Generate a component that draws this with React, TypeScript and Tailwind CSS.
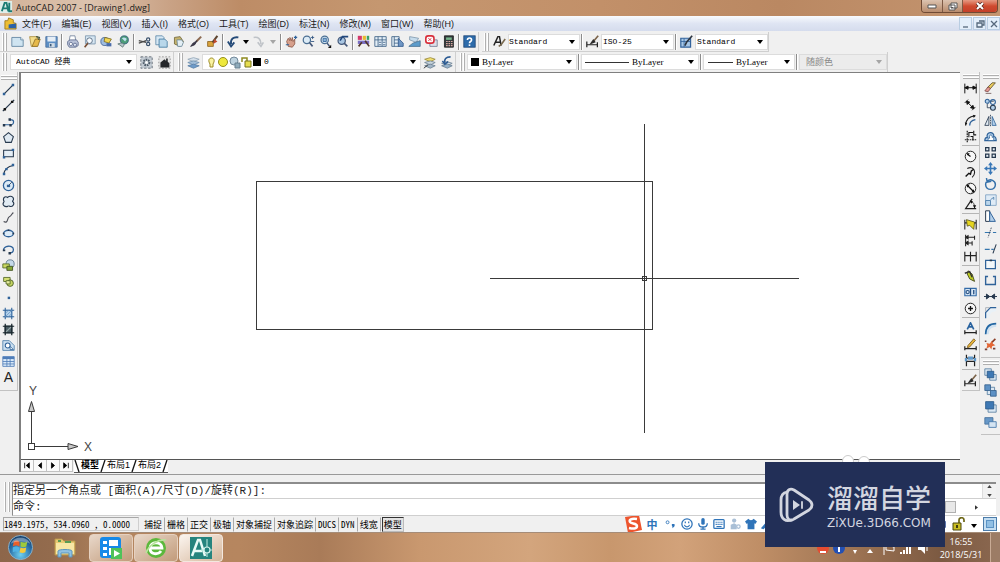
import React from "react";
import type { ReactNode } from "react";

type IconMap = Record<string, ReactNode>;

const D = "#26384d";
const B = "#2f6299";
const L = "#b4d0ea";

const icons: IconMap = {
  "New": <g><path d="M1 3h11l3 3v8H1z" fill="#cfe4f1" stroke="#5a7f9c" /><path d="M12 3v3h3" fill="#fff" stroke="#5a7f9c" /></g>,
  "Open": <g><path d="M2 2h10l-1 12H4z" fill="#f3dd8a" stroke="#a98a3c" /><path d="M5 14l4-9h6l-3 9z" fill="#e6b94a" stroke="#8c6d24" /><path d="M10 2l4 1-1 3" fill="none" stroke="#3c4d3a" strokeWidth="1.5" /></g>,
  "Save": <g><path d="M1 2h14v13H1z" fill="#5e8fc4" stroke="#4a6f9c" /><path d="M3 2h10v6H3z" fill="#e6eef6" /><path d="M5 10h7v5H5z" fill="#cfdbe6" /><path d="M6 11h2v3H6z" fill="#3b5a7a" /></g>,
  "Plot": <g><path d="M5 1h6l1 6H4z" fill="#fff" stroke="#6f7f9a" /><path d="M2 8l3-2h8l2 3v4l-3 2H4l-2-3z" fill="#b9c2d8" stroke="#5c6a8e" /><circle cx="6" cy="11" r="2" fill="#fff" stroke="#5c6a8e" /><circle cx="11" cy="12" r="2" fill="#dfe6f3" stroke="#5c6a8e" /></g>,
  "Plot Preview": <g><path d="M3 1h12v10H3z" fill="#d6e6f2" stroke="#7793ab" /><circle cx="8" cy="7" r="3.5" fill="#fff" fillOpacity=".8" stroke="#4b6079" /><path d="M6 10l-4 5" stroke="#7a4f35" strokeWidth="2" /></g>,
  "Publish": <g><circle cx="6" cy="8" r="5" fill="#9ebce0" stroke="#3c5e93" /><path d="M6 3l8 2-3 5-6-2z" fill="#f1d552" stroke="#7a6a20" /><path d="M8 10h6v4H8z" fill="#4a6cab" /></g>,
  "3D DWF": <g><circle cx="9" cy="6" r="5" fill="#4c9d78" stroke="#33597c" /><path d="M6 4c3-2 5 0 6 1l-2 3z" fill="#bfe0f0" /><path d="M1 11c4-1 6-2 8 1l-2 3-4-3z" fill="#b7c7c9" stroke="#5c7574" /></g>,
  "Cut": <g><path d="M1 7l9 2M1 10l9-3" stroke="#4b4b4b" strokeWidth="1.5" /><circle cx="12.5" cy="5.5" r="2" fill="none" stroke="#39506b" strokeWidth="1.5" /><circle cx="12.5" cy="11" r="2" fill="none" stroke="#39506b" strokeWidth="1.5" /></g>,
  "Copy": <g><path d="M1 1h8l2 2v9H1z" fill="#d7e8f4" stroke="#5a87a8" /><path d="M5 5h7l3 3v7H5z" fill="#b9d7ea" stroke="#40769e" /></g>,
  "Paste": <g><path d="M3 3l7-1 4 6-4 6-7-3z" fill="#c5b36d" stroke="#6e6335" /><path d="M6 6h6l2 3-2 5H7z" fill="#e4eff5" stroke="#6a8798" /></g>,
  "Match Properties": <g><path d="M15 2l-6 6" stroke="#8c6a52" strokeWidth="2.5" /><path d="M10 7l-3 5-5 2 3-4z" fill="#3d3a4c" stroke="#2a2736" /></g>,
  "Block Editor": <g><path d="M2 8h7v6H2z" fill="#dba43c" stroke="#8a611f" /><path d="M14 1l-6 8" stroke="#5d4630" strokeWidth="2.5" /><path d="M10 5l4 3-5 3z" fill="#c04a2d" /></g>,
  "Undo": <path d="M14 3C8 2 4 5 5 11M1 8l4 6 4-5" fill="none" stroke="#244a78" strokeWidth="2.3" />,
  "Redo": <path d="M2 3c6-1 9 2 9 8M7 9l4 5 3-5" fill="none" stroke="#bfc3c8" strokeWidth="2" />,
  "Pan": <g><path d="M4 14L2 8l2-4 2 3V3l2 4 1-4 1 5 2-3v6l-3 4z" fill="#d7a08c" stroke="#8a5646" /><path d="M11 3h4M13 1v4M1 12h4" stroke="#2f6299" strokeWidth="1.5" /></g>,
  "Zoom Realtime": <g><circle cx="6" cy="6" r="4.5" fill="#dcebf6" stroke="#4b6f93" strokeWidth="1.5" /><path d="M9 9l4 5" stroke="#45597a" strokeWidth="2" /><path d="M11 3h4M13 1v4M11 8h4" stroke="#2b4f7c" /></g>,
  "Zoom Window": <g><circle cx="7" cy="6" r="4.5" fill="#dcebf6" stroke="#4b6f93" strokeWidth="1.5" /><path d="M5 4h4v4H5z" fill="#8cb3d7" stroke="#2f6299" /><path d="M10 10l3 4" stroke="#45597a" strokeWidth="2" /><path d="M15 12v4h-4z" fill="#111" /></g>,
  "Zoom Previous": <g><circle cx="7" cy="7" r="4.5" fill="#a9c6e2" stroke="#45597a" strokeWidth="1.5" /><path d="M10 10l4 4" stroke="#45597a" strokeWidth="2" /><path d="M15 2H8L5 7" fill="none" stroke="#21477c" strokeWidth="2" /></g>,
  "Properties": <g><path d="M1 1h5v5H1z" fill="#d4386b" /><path d="M7 1h4v5H7z" fill="#e8b930" /><path d="M12 1h3v5h-3z" fill="#39a06a" /><path d="M1 7h14v4H1z" fill="#7a6ec4" /><path d="M10 7l5 7M6 9l-4 5" stroke="#513528" strokeWidth="2" fill="none" /></g>,
  "DesignCenter": <g><path d="M1 2h14v12H1z" fill="#e3eef6" stroke="#3b5f84" /><path d="M5 2v12M10 2v12M1 6h14M6 9h3M11 9h3M6 12h3M11 12h3" stroke="#3b5f84" /></g>,
  "Tool Palettes": <g><path d="M1 2h9v12H1z" fill="#e3eef6" stroke="#3b5f84" /><path d="M4 2v12M4 6h5M4 10h5" stroke="#3b5f84" /><path d="M9 4l6 6v4H9z" fill="#6f96c4" stroke="#31598c" /></g>,
  "Sheet Set Manager": <g><path d="M2 2l11 2-3 5-8-3z" fill="#c6dcec" stroke="#7f98ad" /><path d="M1 14l5-4 9-3v7z" fill="#5d9ccb" stroke="#4a708f" /></g>,
  "Markup Set Manager": <g><path d="M6 6h9v8H6z" fill="#dcdfe8" stroke="#6f7890" /><rect x="1" y="1" width="10" height="9" rx="3" fill="#fff" stroke="#d82f3b" strokeWidth="2" /><path d="M4 4l4 3M8 4L4 7" stroke="#d82f3b" /></g>,
  "QuickCalc": <g><path d="M3 1h11v14H3z" fill="#333a3d" stroke="#1e1e1e" /><path d="M5 3h7v3H5z" fill="#77b58b" /><path d="M5 8h2M8 8h2M11 8h2M5 10.500h2M8 10.500h2M11 10.500h2M5 13h2M8 13h2M11 13h2" stroke="#d8a7a0" strokeWidth="1.5" /></g>,
  "Help": <g><rect x="1" y="1" width="14" height="14" fill="#2e6cab" stroke="#1d4576" /><path d="M5.500 6c0-3 5-3 5 0 0 2-2.500 2-2.500 4" fill="none" stroke="#fff" strokeWidth="2" /><path d="M7 11.500h2v2H7z" fill="#fff" /></g>,
  "Text Style": <g><path d="M1 13L6 2h2l2 11M3 9h6" fill="none" stroke="#222" strokeWidth="1.800" /><path d="M15 5l-5 7-3 2" stroke="#7a6a50" strokeWidth="2" fill="none" /></g>,
  "Dimension Style": <g><path d="M1 8v7M14 9v6M1 12h13" stroke="#222" strokeWidth="1.500" /><path d="M15 1L9 8" stroke="#7a6248" strokeWidth="2" /><path d="M9 5l3 4-8 3z" fill="#2c2c2c" /></g>,
  "Table Style": <g><path d="M1 4h12v11H1z" fill="#a8c7e6" stroke="#33639c" strokeWidth="1.500" /><path d="M1 8h12M5 4v11" stroke="#33639c" /><path d="M15 1L8 9l-2 4" stroke="#2d3540" strokeWidth="2" fill="none" /></g>,
  "Workspace Settings": <g><rect x="1" y="1" width="14" height="14" fill="#c3cbd3" stroke="#56616b" strokeDasharray="3 2" /><circle cx="8" cy="8" r="3.500" fill="none" stroke="#4c5a67" strokeWidth="2.500" strokeDasharray="2 1" /><circle cx="8" cy="8" r="1.500" fill="#fff" /></g>,
  "My Workspace": <g><rect x="1" y="1" width="14" height="14" fill="#e4e4e4" stroke="#8b8b8b" strokeDasharray="2 2" /><path d="M3 8l5-4 2 2V3h2v4l2 2v5H3z" fill="#26282b" /></g>,
  "Layer Properties": <g><path d="M1 4l7-2 7 2-7 3z" fill="#d5e0ea" stroke="#93a6b8" /><path d="M1 8l7-2 7 2-7 3z" fill="#a3bfda" stroke="#6f8fae" /><path d="M1 12l7-2 7 2-7 3z" fill="#6e9bc9" stroke="#5a80a8" /></g>,
  "Make Layer Current": <g><path d="M2 4l7-2 6 2-6 3z" fill="#f0df70" stroke="#998635" /><path d="M2 8l7-2 6 2-6 3z" fill="#c9d6de" stroke="#6b8093" /><path d="M2 12l7-2 6 2-6 3z" fill="#a3b6c7" stroke="#6b8093" /><path d="M1 15l5-4" stroke="#222" /></g>,
  "Layer Previous": <g><path d="M2 9l7-2 6 2-6 3z" fill="#cbdbe8" stroke="#6b8093" /><path d="M2 12l7-2 6 2-6 3z" fill="#94b1cb" stroke="#6b8093" /><path d="M13 1C7 1 5 4 6 8M3 6l3 4 4-3" fill="none" stroke="#2b5a93" strokeWidth="2" /></g>,

  "Line": <g><path d="M3 13L13 3" stroke={D} strokeWidth="1.500" /><path d="M1 12h3v3H1zM12 1h3v3h-3z" fill={B} /></g>,
  "Construction Line": <g><path d="M1 15L15 1" stroke={D} strokeWidth="1.500" /><path d="M2 11h3v3H2zM11 2h3v3h-3z" fill="#111" /></g>,
  "Polyline": <g><path d="M2 12h10c3-1 3-6 0-6H9" fill="none" stroke={B} strokeWidth="1.500" /><path d="M1 11h3v3H1zM9 11h3v3H9zM8 4h3v3H8z" fill={D} /></g>,
  "Polygon": <path d="M8 2l6 5-2.500 7h-7L2 7z" fill="#dfe9f2" stroke={D} strokeWidth="1.300" />,
  "Rectangle": <g><path d="M2 4h12v8H2z" fill="#e5eef6" stroke={D} strokeWidth="1.300" /><path d="M1 11h3v3H1zM12 2h3v3h-3z" fill={B} /></g>,
  "Arc": <g><path d="M2 14C3 8 7 4 14 3" fill="none" stroke={D} strokeWidth="1.300" /><path d="M1 12h3v3H1zM4 6h3v3H4zM12 1h3v3h-3z" fill={B} /></g>,
  "Circle": <g><circle cx="8" cy="8" r="6.300" fill="#dcebf7" stroke={B} strokeWidth="1.600" /><path d="M8 8l4-4" stroke={D} /><path d="M6 7h4v3H6z" fill={B} /></g>,
  "Revision Cloud": <path d="M7 3c3-3 8-1 7 3-1 1-1 1-1 2 3 2 1 7-3 6-2-1-2-1-3 0-4 1-7-2-5-5 1-1 1-1 0-2C1 3 4 1 7 3z" fill="#e1ebf3" stroke={D} strokeWidth="1.400" />,
  "Spline": <path d="M2 13c6 3 4-5 7-6s3-4 5-5" fill="none" stroke="#4d4f58" strokeWidth="1.400" />,
  "Ellipse": <g><ellipse cx="8" cy="8" rx="6" ry="4" fill="#dcebf7" stroke={B} strokeWidth="1.700" /><path d="M1 7h2v2H1zM13 7h2v2h-2zM7 3h2v2H7z" fill={D} /></g>,
  "Ellipse Arc": <g><path d="M2 9C1 3 14 2 14 8c0 3-2 4-4 4" fill="none" stroke={B} strokeWidth="1.600" /><path d="M1 8h3v2H1zM8 11h3v3H8z" fill={D} /></g>,
  "Insert Block": <g><circle cx="10" cy="6" r="5" fill="#c5d9e9" stroke="#5b7488" /><path d="M1 6h8v5H1z" fill="#c9d860" stroke="#4d6222" /><path d="M6 9h7v5H6z" fill="#87a834" stroke="#3a4c1d" /></g>,
  "Make Block": <g><path d="M2 3h8v5H2z" fill="#d4df73" stroke="#4d6222" /><circle cx="10" cy="10" r="4" fill="#c3d361" stroke="#3f5220" /><path d="M5 7h5v4H5z" fill="#e6ec9f" stroke="#4d6222" /></g>,
  "Point": <path d="M7 7h3v3H7z" fill={B} />,
  "Hatch": <g><path d="M3 3h10v10H3z" fill={L} /><path d="M1 4h14M1 12h14M4 1v14M12 1v14" stroke={B} strokeWidth="1.300" /><path d="M4 12l8-8M4 8l4-4M8 12l4-4" stroke="#6d9cc8" /></g>,
  "Gradient": <g><path d="M3 3h10v10H3z" fill="#4a5c63" /><path d="M1 4h14M1 12h14M4 1v14M12 1v14" stroke="#18252b" strokeWidth="1.500" /><path d="M5 11l6-6" stroke="#96a9a9" strokeWidth="1.500" /></g>,
  "Region": <g><path d="M1 2h8l6 6v6H1z" fill="#cbdff0" stroke="#4a7ba8" /><circle cx="7" cy="8" r="3" fill="#fff" stroke={B} strokeWidth="1.300" /><path d="M10 9l4 4h-4z" fill="#fff" stroke={B} /></g>,
  "Table": <g><path d="M1 2h14v12H1z" fill="#d9e9f8" stroke="#4f7db8" /><path d="M1 2h14v3H1z" fill="#4f7db8" /><path d="M1 8h14M1 11h14M6 4v10M10 4v10" stroke="#4f7db8" /></g>,

  "Linear Dimension": <path d="M1 2v12M15 2v12M1 7h14M1 7l4-2v4zM15 7l-4-2v4z" fill="#111" stroke="#111" strokeWidth="1.200" />,
  "Aligned Dimension": <path d="M1 6l4-4M10 15l4-4M3 4l9 9M3 4l4 1-3 3zM12 13l-4-1 3-3z" fill="#111" stroke="#111" strokeWidth="1.200" />,
  "Arc Length": <g><path d="M2 14C2 7 6 3 14 2" fill="none" stroke="#222" strokeWidth="1.500" /><path d="M7 14c0-4 2-6 7-7" fill="none" stroke={B} strokeWidth="1.600" /><path d="M1 10l3 1-2 3zM11 1l3 1-2 3z" fill="#111" /></g>,
  "Ordinate Dimension": <g><path d="M4 1v14M1 12h14" stroke="#222" strokeWidth="1.500" strokeDasharray="2 1" /><path d="M6 9V3h5M8 8h3v5M12 1v5h3" fill="none" stroke="#111" strokeWidth="1.300" /></g>,
  "Radius Dimension": <g><circle cx="8" cy="8" r="6.500" fill="#f7f7f7" stroke="#222" strokeWidth="1.200" /><path d="M8 8L4 5" stroke="#111" strokeWidth="1.500" /><path d="M3 4h4L5 7z" fill="#111" /></g>,
  "Jogged Dimension": <g><path d="M4 3c8-4 12 5 6 11" fill="none" stroke="#222" strokeWidth="1.300" /><path d="M2 13l4-4 2 1 1-4 3-2" fill="none" stroke="#111" strokeWidth="1.700" /></g>,
  "Diameter Dimension": <g><circle cx="8" cy="8" r="6.500" fill="#f7f7f7" stroke="#222" strokeWidth="1.200" /><path d="M4 4l8 8" stroke="#111" strokeWidth="1.500" /><path d="M3 3h4L4 7zM13 13H9l3-4z" fill="#111" /></g>,
  "Angular Dimension": <g><path d="M10 1L2 13h13" fill="none" stroke="#222" strokeWidth="1.500" /><path d="M8 4c4 1 5 4 5 8" fill="none" stroke="#222" /><path d="M7 3l4 1-2 3zM11 9h4l-2 4z" fill="#111" /></g>,
  "Quick Dimension": <g><path d="M1 2v12M15 2v12M1 6h14" stroke="#222" strokeWidth="1.300" /><path d="M3 2l10 3-1 9-5-5-3 1z" fill="#e6d51e" stroke="#55511b" /></g>,
  "Baseline Dimension": <path d="M2 1v14M2 4h11M2 11h8M13 2v5M10 9v5M2 4l3-2v4zM2 11l3-2v4z" fill="#111" stroke="#222" strokeWidth="1.300" />,
  "Continue Dimension": <path d="M1 2v12M8 2v12M15 2v12M1 7h14" stroke="#222" strokeWidth="1.400" />,
  "Quick Leader": <g><path d="M5 1l5 4 3 9-6-3-3-6z" fill="#bccb22" stroke="#353a12" /><path d="M1 4l6-2 3 7" fill="none" stroke="#333" strokeWidth="1.700" /></g>,
  "Tolerance": <g><path d="M1 3h14v9H1z" fill="#d7e7f5" stroke="#336ba8" strokeWidth="1.400" /><path d="M8 3v9M12 5v5" stroke="#234d80" strokeWidth="1.600" /><circle cx="4.500" cy="7.500" r="2" fill="none" stroke="#234d80" strokeWidth="1.300" /></g>,
  "Center Mark": <g><circle cx="8" cy="8" r="6.500" fill="#f7f7f7" stroke="#222" strokeWidth="1.200" /><path d="M8 5v6M5 8h6" stroke="#111" strokeWidth="1.600" /></g>,
  "Dimension Edit": <g><path d="M4 9L8 1l4 8M6 6h4" fill="none" stroke="#28629e" strokeWidth="2" /><path d="M1 10v5M15 10v5M1 13h14" stroke="#222" strokeWidth="1.500" /></g>,
  "Dimension Text Edit": <g><path d="M1 10v5M15 10v5M1 13h14" stroke="#222" strokeWidth="1.500" /><path d="M12 1L5 9l-1 3 3-1 7-8z" fill="#e7b53b" stroke="#78581d" /></g>,
  "Dimension Update": <g><path d="M3 1v14M13 1v14M3 5h10M3 9h10" stroke="#222" strokeWidth="1.500" /><path d="M1 5h3v4H1zM12 5h3v4h-3zM5 3h6v4H5z" fill="#629aca" /></g>,

  "Erase": <g><path d="M14 1l-6 7-4-1 6-6z" fill="#eacb5b" stroke="#594b2e" /><path d="M8 8l-3 4-4-1 4-5z" fill="#e69992" stroke="#774848" /><path d="M2 14h7" stroke="#6d5555" /></g>,
  "Copy Object": <g><circle cx="4" cy="4" r="2.500" fill={L} stroke={B} strokeWidth="1.300" /><path d="M4 7v5h4M7 4h5" fill="none" stroke={D} /><circle cx="11" cy="5" r="3" fill="none" stroke={B} strokeWidth="1.400" /><circle cx="11" cy="12" r="3" fill={L} stroke={D} strokeWidth="1.300" /></g>,
  "Mirror": <g><path d="M6 3v11H1z" fill="#e2ebf4" stroke={D} /><path d="M10 3v11h5z" fill={L} stroke={B} /><path d="M8 1v14" stroke={D} strokeDasharray="2 1" /></g>,
  "Offset": <g><path d="M1 13c0-3 1-4 3-4C2 2 13 1 12 8c3 0 3 3 3 5z" fill={L} stroke={B} strokeWidth="1.500" /><path d="M5 13V10h2c-2-5 4-5 3-1h2v4z" fill="#fff" stroke={B} /></g>,
  "Array": <path d="M2 2h4v4H2zM10 2h4v4h-4zM2 10h4v4H2zM10 10h4v4h-4z" fill="#e6edf4" stroke={D} strokeWidth="1.500" />,
  "Move": <path d="M8 0l3 4H9v3h3V5l4 3-4 3V9H9v3h2l-3 4-3-4h2V9H4v2L0 8l4-3v2h3V4H5z" fill="#3977b7" />,
  "Rotate": <path d="M4 4c4-4 10 0 10 4 0 8-12 8-12 0 0-1 0-2 1-3M3 0l1 5 5-1" fill="none" stroke="#336fa9" strokeWidth="1.800" />,
  "Scale": <g><path d="M2 1h13v13H2z" fill="#dfebf6" stroke="#7b9fc1" /><path d="M2 8h6v6H2z" fill="#bcd6ec" stroke="#4276a6" /><path d="M8 7l4-3v3" fill="none" stroke="#4276a6" /></g>,
  "Stretch": <g><path d="M2 1h5v13H2z" fill="#fff" stroke={D} strokeWidth="1.200" /><path d="M7 2l7 12H7z" fill={L} stroke={B} strokeWidth="1.200" /></g>,
  "Trim": <g><path d="M1 8h7M11 8h4" stroke="#3475ad" strokeWidth="1.500" /><path d="M9 2L5 14" stroke={D} strokeDasharray="2 1" /></g>,
  "Extend": <g><path d="M1 9h6M9 9h3" stroke="#3475ad" strokeWidth="1.500" /><path d="M15 3l-4 11" stroke={D} strokeWidth="1.300" /></g>,
  "Break at Point": <g><path d="M2 3h12v10H2z" fill="#f3f7fa" stroke={B} strokeWidth="1.500" /><path d="M7 2h3v2H7z" fill={D} /></g>,
  "Break": <path d="M5 3H2v10h12V3h-3" fill="none" stroke={B} strokeWidth="1.700" />,
  "Join": <path d="M0 8h16M3 5l4 3-4 3zM13 5L9 8l4 3z" fill={D} stroke={D} strokeWidth="1.200" />,
  "Chamfer": <g><path d="M2 15V8l6-6h7v4L9 8l-4 7z" fill="#e9f1f7" /><path d="M2 15V8l6-6h7" fill="none" stroke={B} strokeWidth="1.500" /><path d="M2 7V2h5" fill="none" stroke="#a1a9b0" /></g>,
  "Fillet": <g><path d="M2 15C2 6 6 2 15 2v4C9 6 6 9 6 15z" fill="#cfe1f0" /><path d="M2 15C2 6 6 2 15 2" fill="none" stroke="#2467a3" strokeWidth="2" /></g>,
  "Explode": <g><path d="M3 6l4 1 3-4 1 4 3 2-4 1-1 4-2-3-4 2 1-4z" fill="#e46735" /><path d="M10 5l4-4" stroke="#8b3d25" strokeWidth="2" /><path d="M1 13h3v2H1zM11 12h3v2h-3zM1 3h2v2H1z" fill="#754238" /></g>,
  "Bring to Front": <g><path d="M1 1h8v8H1zM7 8h8v7H7z" fill="#dbe8f3" stroke="#557c9f" /><path d="M4 4h8v8H4z" fill="#3e78b4" stroke="#275788" /></g>,
  "Send to Back": <g><path d="M4 4h9v9H4z" fill="#dbe8f3" stroke="#557c9f" /><path d="M1 1h7v7H1zM8 8h7v7H8z" fill="#5d91c5" stroke="#345f8b" /></g>,
  "Bring Above Objects": <g><path d="M5 6h10v9H5z" fill="#dbe8f3" stroke="#557c9f" /><path d="M2 2h10v9H2z" fill="#3e78b4" stroke="#275788" /></g>,
  "Send Under Objects": <g><path d="M1 2h10v8H1z" fill="#6798c8" stroke="#426f9a" /><path d="M6 7h9v7H6z" fill="#d4e4f2" stroke="#3f74a8" /></g>,
};

function Tool({ name }: { name: string }) {
  return (
    <button type="button" aria-label={name} className="flex h-4 w-[17px] shrink-0 items-center justify-center">
      {name === "Multiline Text" ? (
        <span className="font-['Liberation_Sans'] text-sm leading-4 text-[#222]">A</span>
      ) : (
        <svg viewBox="0 0 16 16" className="size-[13px]" fill="none">{icons[name]}</svg>
      )}
    </button>
  );
}

const Tools = ({ names }: { names: string[] }) => <>{names.map((n) => <Tool key={n} name={n} />)}</>;

const Sep = () => <span className="mx-px h-4 w-[2px] shrink-0 border-l border-[#8c8c8c] bg-white" />;

const Grip = () => (
  <span className="mx-[2px] flex h-[18px] shrink-0 gap-px">
    <span className="w-[2px] border-r border-[#b0b0b0] bg-white" />
    <span className="w-[2px] border-r border-[#b0b0b0] bg-white" />
  </span>
);

const HGrip = () => (
  <span className="flex h-[6px] w-4 shrink-0 flex-col gap-px">
    <span className="h-[2px] border-b border-[#b0b0b0] bg-white" />
    <span className="h-[2px] border-b border-[#b0b0b0] bg-white" />
  </span>
);

function Caret({ muted = false }: { muted?: boolean }) {
  return (
    <svg viewBox="0 0 6 4" className={muted ? "h-1 w-1.5 shrink-0 fill-[#a5a5a5]" : "h-1 w-1.5 shrink-0 fill-black"}>
      <path d="M0 0h6L3 4z" />
    </svg>
  );
}

type DropProps = { label: string; value: string; box: string; serif?: boolean; disabled?: boolean; children?: ReactNode };

function Drop({ label, value, box, serif = false, disabled = false, children }: DropProps) {
  const face = serif ? "font-['Liberation_Serif','Noto_Sans_CJK_SC',serif] text-[9px]" : "font-['Liberation_Mono','Noto_Sans_CJK_SC',monospace] text-[8px]";
  const tone = disabled ? "bg-[#ececec] text-[#888]" : "bg-white text-black";
  return (
    <span className={`flex h-4 shrink-0 items-center gap-[3px] border border-[#dcdcdc] pr-1 ${tone} ${box}`}>
      {children}
      <select aria-label={label} disabled={disabled} defaultValue={value} className={`min-w-0 flex-1 appearance-none bg-transparent p-0 leading-3 opacity-100 outline-none ${face}`}>
        <option>{value}</option>
      </select>
      <Caret muted={disabled} />
    </span>
  );
}

const Swatch = () => <span className="size-2 shrink-0 bg-black" />;

const menus = ["文件(F)", "编辑(E)", "视图(V)", "插入(I)", "格式(O)", "工具(T)", "绘图(D)", "标注(N)", "修改(M)", "窗口(W)", "帮助(H)"];

const drawTools = ["Line", "Construction Line", "Polyline", "Polygon", "Rectangle", "Arc", "Circle", "Revision Cloud", "Spline", "Ellipse", "Ellipse Arc", "Insert Block", "Make Block", "Point", "Hatch", "Gradient", "Region", "Table", "Multiline Text"];

const dimensionGroups = [
  ["Linear Dimension", "Aligned Dimension", "Arc Length", "Ordinate Dimension"],
  ["Radius Dimension", "Jogged Dimension", "Diameter Dimension", "Angular Dimension"],
  ["Quick Dimension", "Baseline Dimension", "Continue Dimension"],
  ["Quick Leader", "Tolerance", "Center Mark"],
  ["Dimension Edit", "Dimension Text Edit", "Dimension Update"],
  ["Dimension Style"],
];

const modifyTools = ["Erase", "Copy Object", "Mirror", "Offset", "Array", "Move", "Rotate", "Scale", "Stretch", "Trim", "Extend", "Break at Point", "Break", "Join", "Chamfer", "Fillet", "Explode"];
const orderTools = ["Bring to Front", "Send to Back", "Bring Above Objects", "Send Under Objects"];

const statusModes = ["捕捉", "栅格", "正交", "极轴", "对象捕捉", "对象追踪", "DUCS", "DYN", "线宽", "模型"];

function TitleBar() {
  return (
    <header className="flex h-4 items-start bg-[linear-gradient(90deg,#d3b298_0%,#dcc3ae_9%,#c9a285_17%,#bd8c66_24%,#c59770_38%,#c29069_60%,#ba8862_78%,#c49570_100%)]">
      <svg viewBox="0 0 14 14" className="mt-px size-[13px]">
        <path d="M0 0h13v13H0z" fill="#dfeeea" />
        <path d="M2 11L5 2h2l2 9M3 8h5M10 2v9h3" fill="none" stroke="#1b7c74" strokeWidth="2" />
      </svg>
      <h1 className="ml-[3px] flex-1 font-['Open_Sans',sans-serif] text-[9px] leading-[15px] text-[#1c1c1c]">AutoCAD 2007 - [Drawing1.dwg]</h1>
      <div className="mr-[2px] flex h-[13px] overflow-hidden rounded-b border border-t-0 border-[#6f4a35]">
        <button type="button" aria-label="Minimize" className="flex w-[21px] items-center justify-center border-r border-[#7d5a45] bg-linear-to-b from-[#dcc3b0] to-[#b88c6d]">
          <svg viewBox="0 0 10 8" className="h-2 w-2.5"><path d="M1 3h8v3H1z" fill="#fff" stroke="#555" /></svg>
        </button>
        <button type="button" aria-label="Restore" className="flex w-5 items-center justify-center border-r border-[#7d5a45] bg-linear-to-b from-[#dcc3b0] to-[#b88c6d]">
          <svg viewBox="0 0 10 9" className="h-[9px] w-2.5"><path d="M3 1h6v5H3zM1 3h6v5H1z" fill="#fff" stroke="#555" /><path d="M3 5h2v1H3z" fill="#555" /></svg>
        </button>
        <button type="button" aria-label="Close" className="flex w-[34px] items-center justify-center bg-linear-to-b from-[#e49a83] via-[#cf4a2f] to-[#c4402a]">
          <svg viewBox="0 0 10 8" className="h-2 w-2.5"><path d="M2 1l6 6M8 1L2 7" stroke="#5b2a22" strokeWidth="3.500" /><path d="M2 1l6 6M8 1L2 7" stroke="#fff" strokeWidth="2" /></svg>
        </button>
      </div>
    </header>
  );
}

function MenuBar() {
  return (
    <nav className="flex h-[15px] items-center bg-linear-to-b from-[#f8fafd] via-[#dfe5f3] to-[#d5dced]">
      <svg viewBox="0 0 14 14" className="ml-1 size-[13px]">
        <path d="M1 4h3l1-3 5 2v3l3 1v6H1z" fill="#edbe33" stroke="#a17c1f" />
        <path d="M5 8l8-1v5H5z" fill="#2b62a8" />
      </svg>
      <ul className="ml-[5px] flex flex-1 gap-[10px] font-['Liberation_Sans','Noto_Sans_CJK_SC',sans-serif] text-[9px] leading-[14px] text-[#1b1b1b]">
        {menus.map((m) => <li key={m}><button type="button" className="whitespace-nowrap">{m}</button></li>)}
      </ul>
      <div className="flex gap-px">
        {["M2 8h5", "M4 2h5v4H7M2 4h5v4H2z", "M2 2l6 6M8 2L2 8"].map((d, i) => (
          <button key={d} type="button" aria-label={["Minimize drawing", "Restore drawing", "Close drawing"][i]} className="flex h-[13px] w-[13px] items-center justify-center border border-[#b9cde2] bg-[#e3eefa]">
            <svg viewBox="0 0 10 10" className="size-2.5"><path d={d} fill="none" stroke="#56687c" strokeWidth="1.300" /></svg>
          </button>
        ))}
      </div>
    </nav>
  );
}

function Toolbars() {
  return (
    <div className="overflow-hidden pt-px">
      <div className="flex">
        <div role="toolbar" aria-label="Standard" className="flex h-5 items-center border-r border-b border-[#cfcfcf]">
          <Grip />
          <Tools names={["New", "Open", "Save"]} />
          <Sep />
          <Tools names={["Plot", "Plot Preview", "Publish", "3D DWF"]} />
          <Sep />
          <Tools names={["Cut", "Copy", "Paste", "Match Properties", "Block Editor"]} />
          <Sep />
          <Tool name="Undo" />
          <button type="button" aria-label="Undo list" className="flex w-2 justify-center"><Caret /></button>
          <Tool name="Redo" />
          <button type="button" aria-label="Redo list" className="flex w-3 justify-center"><Caret muted /></button>
          <Sep />
          <Tools names={["Pan", "Zoom Realtime", "Zoom Window", "Zoom Previous"]} />
          <Sep />
          <Tools names={["Properties", "DesignCenter", "Tool Palettes", "Sheet Set Manager", "Markup Set Manager", "QuickCalc"]} />
          <Sep />
          <Tool name="Help" />
        </div>
        <div role="toolbar" aria-label="Styles" className="ml-[3px] flex h-5 items-center border-r border-b border-[#cfcfcf]">
          <Grip />
          <Tool name="Text Style" />
          <Drop label="Text style" value="Standard" box="w-[72px]" />
          <Sep />
          <Tool name="Dimension Style" />
          <Drop label="Dimension style" value="ISO-25" box="w-[73px] pl-px" />
          <Sep />
          <Tool name="Table Style" />
          <Drop label="Table style" value="Standard" box="w-[73px] pl-px" />
        </div>
      </div>
      <div className="flex">
        <div role="toolbar" aria-label="Workspaces" className="flex h-5 items-center gap-px border-r border-[#cfcfcf]">
          <Grip />
          <Drop label="Workspace" value="AutoCAD 经典" box="w-[127px] pl-[5px]" />
          <Tool name="Workspace Settings" />
          <Tool name="My Workspace" />
        </div>
        <div role="toolbar" aria-label="Layers" className="ml-[2px] flex h-5 items-center border-r border-[#cfcfcf]">
          <Grip />
          <Tool name="Layer Properties" />
          <Drop label="Layer" value="0" box="w-[219px] pl-1">
            <svg viewBox="0 0 54 14" className="h-3.5 w-[54px]">
              <path d="M3 9C-2 1 11 1 6 9v3H3z" fill="#faf3a0" stroke="#9b8b28" />
              <circle cx="16" cy="7" r="4.500" fill="#eee83c" stroke="#958f1c" />
              <circle cx="27" cy="6" r="4" fill="#bdd2df" stroke="#72899a" /><path d="M28 8h5v5h-5z" fill="#8eaabb" stroke="#667f8e" />
              <path d="M35 7V3h5v4" fill="none" stroke="#8f8b20" strokeWidth="1.500" /><path d="M38 6h6v6h-6z" fill="#e6dd51" stroke="#79751d" />
              <path d="M46 3h8v8h-8z" fill="#000" />
            </svg>
          </Drop>
          <Tool name="Make Layer Current" />
          <Tool name="Layer Previous" />
        </div>
        <div role="toolbar" aria-label="Properties" className="ml-[2px] flex h-5 items-center border-r border-[#cfcfcf]">
          <Grip />
          <Drop label="Color" value="ByLayer" box="w-[110px] pl-[3px]" serif><Swatch /></Drop>
          <Sep />
          <Drop label="Linetype" value="ByLayer" box="w-[118px] pl-[3px]" serif><span className="h-px w-11 shrink-0 bg-[#333]" /></Drop>
          <Sep />
          <Drop label="Lineweight" value="ByLayer" box="w-[92px] pl-1" serif><span className="h-px w-[25px] shrink-0 bg-[#333]" /></Drop>
          <Sep />
          <Drop label="Plot style" value="随颜色" box="w-[88px] pl-1.5" serif disabled />
        </div>
      </div>
    </div>
  );
}

function Drawing() {
  return (
    <div className="relative flex-1 overflow-hidden bg-white">
      <svg className="absolute inset-0 h-full w-full" role="img" aria-label="Model space" shapeRendering="crispEdges">
        <g fill="none" stroke="#3a3a3a" strokeWidth="1">
          <path d="M235.500 108.500h396v148h-396z" />
          <path d="M623.500 51v309M469 205.500h309M621.500 203.500h4v4h-4z" />
          <path d="M7.500 370.500h6v6h-6zM10.500 370V339M14 373.500h33" />
        </g>
        <g fill="#c8c8c8" stroke="#3a3a3a" shapeRendering="auto">
          <path d="M10.500 328.500l3 10h-6z" />
          <path d="M57 373.500l-10-3v6z" />
        </g>
        <g className="font-['Liberation_Sans'] text-xs" fill="#444">
          <text x="8" y="322">Y</text>
          <text x="63" y="378">X</text>
        </g>
      </svg>
    </div>
  );
}

function LayoutTabs() {
  const arrows = [
    ["First tab", "M2 1v7M8 1L4 4.500 8 8z"],
    ["Previous tab", "M7 1L3 4.500 7 8z"],
    ["Next tab", "M3 1l4 3.500L3 8z"],
    ["Last tab", "M8 1v7M2 1l4 3.500L2 8z"],
  ];
  const slash = <svg viewBox="0 0 6 12" className="h-3 w-1.5 shrink-0"><path d="M5 0L1 12" stroke="#111" strokeWidth="1.300" /></svg>;
  return (
    <div className="flex h-[13px] items-center border-t border-[#555] bg-[#f0f0f0]">
      {arrows.map(([label, d]) => (
        <button key={label} type="button" aria-label={label} className="flex h-3 w-[13px] items-center justify-center border-r border-b border-[#c2c2c2] bg-[#fafafa]">
          <svg viewBox="0 0 10 9" className="h-[7px] w-2"><path d={d} fill="#000" stroke="#000" /></svg>
        </button>
      ))}
      <div role="tablist" className="ml-px flex items-center gap-px border-b border-[#555] bg-white font-['Liberation_Sans','Noto_Sans_CJK_SC',sans-serif] text-[9px] leading-[11px] text-black">
        <svg viewBox="0 0 6 12" className="h-3 w-1.5 shrink-0"><path d="M1 0l4 12" stroke="#111" strokeWidth="1.300" /></svg>
        <button type="button" role="tab" aria-selected="true" className="font-bold">模型</button>
        {slash}
        <button type="button" role="tab" aria-selected="false">布局1</button>
        {slash}
        <button type="button" role="tab" aria-selected="false">布局2</button>
        {slash}
      </div>
    </div>
  );
}

function CommandWindow() {
  return (
    <section aria-label="Command line" className="flex h-11 flex-col">
      <div className="mt-[2px] h-[8px] border-t border-[#999]" />
      <div className="flex flex-1">
        <div className="ml-1 flex w-2 gap-[2px] pb-1">
          <span className="w-[2px] border-r border-[#b0b0b0] bg-white" />
          <span className="w-[2px] border-r border-[#b0b0b0] bg-white" />
        </div>
        <div className="mr-1 flex flex-1 flex-col border-t-2 border-b border-l border-[#8c8c8c] border-b-[#cfcfcf] bg-white font-['Liberation_Mono','Noto_Sans_CJK_SC',monospace] text-[11px] leading-[14px] text-[#222]">
          <div className="flex h-[15px] items-center border-b border-[#cfcfcf]">
            <p className="flex-1 whitespace-pre">指定另一个角点或 [面积(A)/尺寸(D)/旋转(R)]:</p>
            <button type="button" aria-label="Scroll history" className="flex h-[14px] w-[14px] flex-col items-center justify-between border-l border-[#ddd] bg-[#f2f2f2] py-px">
              <svg viewBox="0 0 6 4" className="h-[3px] w-[5px] fill-[#444]"><path d="M0 4h6L3 0z" /></svg>
              <svg viewBox="0 0 6 4" className="h-[3px] w-[5px] fill-[#444]"><path d="M0 0h6L3 4z" /></svg>
            </button>
          </div>
          <div className="flex flex-1 items-center">
            <label htmlFor="command">命令:</label>
            <input id="command" className="h-3 min-w-0 flex-1 bg-transparent outline-none" />
            <span className="h-3 w-[11px] border border-[#b0b0b0] bg-[#e8e8e8]" />
            <button type="button" aria-label="Scroll right" className="mr-4 ml-4 flex w-2 justify-center">
              <svg viewBox="0 0 4 6" className="h-[5px] w-[3px] fill-[#333]"><path d="M0 0v6l4-3z" /></svg>
            </button>
          </div>
        </div>
      </div>
    </section>
  );
}

function ImeBar() {
  return (
    <div className="flex h-[17px] items-center bg-white pr-2 text-[#2f74b9]">
      <svg viewBox="0 0 20 20" className="-ml-[10px] size-5">
        <path d="M2 3l14-2 3 15-14 3z" fill="#ed552e" />
        <path d="M14 5C8 4 6 6 7 8s7 1 7 4-4 3-8 2" fill="none" stroke="#fff" strokeWidth="2.500" />
      </svg>
      <span className="w-[18px] text-center font-['Noto_Sans_CJK_SC',sans-serif] text-[11px] leading-4 font-bold">中</span>
      <svg viewBox="0 0 14 14" className="ml-1 size-3"><circle cx="3" cy="5" r="1.700" fill="none" stroke="currentColor" /><path d="M8 7h3c1 3-1 4-3 5 1-1 1-2 0-3z" fill="currentColor" /></svg>
      <svg viewBox="0 0 14 14" className="ml-1 size-3"><circle cx="7" cy="7" r="6" fill="none" stroke="currentColor" strokeWidth="1.500" /><path d="M5 4v2M9 4v2M4 8c1 3 5 3 6 0" fill="none" stroke="currentColor" strokeWidth="1.400" /></svg>
      <svg viewBox="0 0 14 14" className="ml-1 size-3"><rect x="5" y="0" width="4" height="8" rx="2" fill="currentColor" /><path d="M2 6c0 6 10 6 10 0M7 10v3M4 13h6" fill="none" stroke="currentColor" strokeWidth="1.500" /></svg>
      <svg viewBox="0 0 14 14" className="ml-1 size-3"><rect x="1" y="2" width="12" height="10" rx="1" fill="#fff" stroke="currentColor" strokeWidth="1.500" /><path d="M3 5h9M3 7.500h9" stroke="currentColor" strokeWidth="1.300" strokeDasharray="1.500 .700" /><path d="M4 10h6" stroke="currentColor" strokeWidth="1.300" /></svg>
      <svg viewBox="0 0 14 14" className="ml-1 size-3 text-[#a9bfd6]"><circle cx="6" cy="3" r="2.500" fill="currentColor" /><path d="M2 13V8l4-2 3 2v5z" fill="currentColor" /><circle cx="11" cy="10" r="2" fill="none" stroke="currentColor" strokeWidth="1.500" /></svg>
      <svg viewBox="0 0 14 14" className="ml-1 size-3"><path d="M4 1c1 2 5 2 6 0l4 3-2 3-1-1v7H3V6L2 7 0 4z" fill="currentColor" /></svg>
      <svg viewBox="0 0 14 14" className="ml-[3px] size-3"><path d="M1 12l7-8 3 3-7 6z" fill="currentColor" /></svg>
    </div>
  );
}

function StatusBar() {
  return (
    <div className="flex h-[17px] items-center overflow-hidden border-b border-[#a58c78] pl-[3px] font-['Noto_Sans_Mono_CJK_SC','Noto_Sans_CJK_SC',monospace] text-[9px] leading-[13px] text-black">
      <output className="h-[14px] w-[136px] border border-[#cfcfcf] border-t-[#a8a8a8] border-l-[#a8a8a8] whitespace-pre">1849.1975, 534.0960 , 0.0000</output>
      <div className="ml-[3px] flex flex-1">
        {statusModes.map((m, i) => (
          <button
            key={m}
            type="button"
            aria-pressed={i === statusModes.length - 1}
            className={
              i === statusModes.length - 1
                ? "ml-px border border-[#bbb] border-t-[#333] border-l-[#333] bg-[#e3e3e3] px-px whitespace-nowrap"
                : "border-y border-r border-transparent border-r-[#aaa] px-[2px] whitespace-nowrap"
            }
          >
            {m}
          </button>
        ))}
      </div>
      <ImeBar />
      <div className="flex h-full w-[220px] items-center justify-end gap-1 bg-white pr-[3px]">
        <svg viewBox="0 0 14 14" className="size-3"><path d="M2 4h9v7H2z" fill="#7d98d2" stroke="#3f5a99" /></svg>
        <svg viewBox="0 0 14 14" className="size-3.5"><path d="M7 6V3c0-3 5-3 5 0v2" fill="none" stroke="#6d6616" strokeWidth="1.700" /><path d="M1 6h8v7H1z" fill="#c9bd22" stroke="#4d490f" /><path d="M4 8h2v3H4z" fill="#3f3c10" /></svg>
        <span className="mt-1 ml-px"><Caret /></span>
        <button type="button" aria-label="Clean screen" className="ml-[2px] flex size-3.5 border border-[#4c7caa] bg-[#c4def2] p-[2px]"><span className="flex-1 border border-[#5b93c5] bg-[#90bfe4]" /></button>
      </div>
    </div>
  );
}

function Taskbar() {
  const slot = "flex h-[28px] w-11 items-center justify-center rounded-sm border border-[#e6d1c0] bg-linear-to-br from-[#e8d8ca] to-[#c29b7a]";
  return (
    <footer className="flex h-[29px] items-center bg-[linear-gradient(90deg,#8d664a_0%,#936b4d_5%,#b3855f_12%,#b6865f_24%,#a97b58_32%,#c9986f_42%,#d3a57d_53%,#c8976d_61%,#d2a27a_68%,#bf8e66_76%,#9b7252_86%,#7c5a42_94%,#8b6850_100%)]">
      <button type="button" aria-label="Start" className="ml-[7px] flex size-[27px] items-center justify-center">
        <svg viewBox="0 0 28 28" className="size-[27px]">
          <defs><radialGradient id="orb" cx=".5" cy=".8" r=".8"><stop offset="0" stopColor="#6fd0f0" /><stop offset=".6" stopColor="#276da6" /><stop offset="1" stopColor="#173c66" /></radialGradient></defs>
          <circle cx="14" cy="14" r="12.500" fill="url(#orb)" stroke="#8fb3c9" />
          <path d="M7 8c3-2 4-1 6 0v5c-2-1-4-2-7 0z" fill="#e8602c" />
          <path d="M14 8c3 1 5 1 7 0l-1 5c-2 1-4 1-6 0z" fill="#9fca3b" />
          <path d="M6 14c3-2 5-1 7 0l-1 5c-2-1-4-1-6 0z" fill="#4fb3e6" />
          <path d="M14 14c2 1 4 1 6 0l-1 5c-2 1-4 1-6 0z" fill="#f6c93a" />
          <path d="M4 10c3-8 17-8 20 0-5-3-15-3-20 0z" fill="#fff" fillOpacity=".35" />
        </svg>
      </button>
      <button type="button" aria-label="Explorer" className="ml-[9px] flex w-11 items-center justify-center">
        <svg viewBox="0 0 24 22" className="h-[22px] w-6">
          <path d="M2 2h7l2 2h11v14H2z" fill="#e8ca72" stroke="#b8954a" />
          <path d="M3 6h18v11H3z" fill="#f8e7a4" />
          <path d="M5 4h3M12 5h6" stroke="#5a9c53" strokeWidth="2" />
          <path d="M5 20v-6c0-2 14-2 14 0v6h-3v-4H8v4z" fill="#8fc1e2" stroke="#5e95ba" />
        </svg>
      </button>
      <button type="button" aria-label="Screen recorder" className={`ml-[2px] ${slot}`}>
        <svg viewBox="0 0 24 24" className="size-6">
          <rect x="1" y="1" width="21" height="21" rx="3" fill="#1689e8" />
          <path d="M4 5h4v3H4zM4 11h4v3H4zM4 17h4v3H4zM10 4h9v6h-9zM10 12h5v7h-5z" fill="#fff" />
          <path d="M12 12h11v11H12z" fill="#4fc259" /><path d="M15 14l6 3.500-6 3.500z" fill="#fff" />
        </svg>
      </button>
      <button type="button" aria-label="Browser" className={`ml-px ${slot}`}>
        <svg viewBox="0 0 24 24" className="size-6">
          <circle cx="12" cy="12" r="10" fill="#5cb83c" />
          <path d="M6 12h12c0-7-12-7-12 0s8 7 11 3" fill="none" stroke="#fff" strokeWidth="2.800" />
          <path d="M2 17C5 9 14 3 22 4" fill="none" stroke="#b9e39d" strokeWidth="1.700" />
        </svg>
      </button>
      <button type="button" aria-label="AutoCAD" className="ml-px flex h-[28px] w-11 items-center justify-center rounded-sm border border-[#f3e8df] bg-linear-to-br from-[#fbf5ef] to-[#d6b79c]">
        <svg viewBox="0 0 24 24" className="size-6">
          <path d="M1 1h22v22H1z" fill="#25847e" />
          <path d="M3 20L9 4h2l5 16M5 15h8" fill="none" stroke="#e8fbf7" strokeWidth="2.500" />
          <path d="M18 3v18M12 14h11" stroke="#a9dcd2" strokeWidth="1.200" /><circle cx="18" cy="14" r="3" fill="#25847e" stroke="#d4f2ec" strokeWidth="1.200" />
        </svg>
      </button>
      <div className="flex flex-1 justify-end">
        <svg viewBox="0 0 112 14" className="h-3.5 w-28">
          <circle cx="7" cy="7" r="6" fill="#e54c31" /><path d="M4 11h6" stroke="#fff" strokeWidth="2" />
          <circle cx="23" cy="7" r="6" fill="#2450b3" /><path d="M23 4v7" stroke="#fff" strokeWidth="2" />
          <path d="M37 9l2 4 2-4zM51 12l3-4 3 4z" fill="#fff" />
          <path d="M68 2v12" stroke="#fff" /><path d="M70 4l8 2v4l-8-1z" fill="none" stroke="#fff" />
          <path d="M84 13v-2h2v2zM87 13V9h2v4zM90 13V6h2v7zM93 13V3h2v10z" fill="#fff" />
          <path d="M102 5h3l4-4v12l-4-4h-3z" fill="#fff" /><path d="M111 4v6" stroke="#fff" />
        </svg>
      </div>
      <time className="ml-2 w-[50px] text-center font-['Open_Sans',sans-serif] text-[9px] leading-[13px] text-white">16:55<br />2018/5/31</time>
      <button type="button" aria-label="Show desktop" className="ml-1 h-full w-2.5 border-l border-[#c9ab95] bg-[#a98a74]/60" />
    </footer>
  );
}

function Banner() {
  return (
    <aside className="absolute right-[55px] bottom-[15px] h-[85px] w-[180px]">
      <span className="absolute -top-[7px] left-[77px] size-3 rounded-full border border-[#ccc] bg-white" />
      <span className="absolute -top-[6px] left-[93px] size-3 rounded-full border border-[#ccc] bg-white" />
      <div className="relative flex h-full items-center bg-[#222f57] pl-[14px] text-[#d3d6e0]">
        <svg viewBox="0 0 36 36" className="size-9 shrink-0" fill="none" stroke="currentColor" strokeWidth="2.800" strokeLinecap="round" strokeLinejoin="round">
          <path d="M8 5C3 6 2 9 2 13v12c0 7 5 10 10 8" />
          <path d="M8 28V7c0-4 3-6 7-4l15 10c4 3 4 7 0 10L15 32c-4 3-7 0-7-4z" />
          <path d="M14 13l7 5-7 5z" fill="currentColor" stroke="none" />
          <path d="M23 15v6" strokeWidth="1.800" />
        </svg>
        <div className="ml-3 pb-px">
          <p className="font-['Noto_Sans_CJK_SC',sans-serif] text-[26px] leading-[38px] font-medium">溜溜自学</p>
          <p className="font-['DejaVu_Sans',sans-serif] text-xs leading-[14px]">ZiXUe.3D66.COM</p>
        </div>
      </div>
    </aside>
  );
}

export default function App() {
  return (
    <div className="relative flex min-h-screen flex-col bg-[#f0f0f0]">
      <TitleBar />
      <MenuBar />
      <Toolbars />
      <main className="flex min-h-[400px] flex-1">
        <div role="toolbar" aria-label="Draw" className="flex w-[18px] shrink-0 flex-col items-center self-start border-r border-b border-[#c2c2c2] pt-[3px] pb-[5px]">
          <HGrip />
          {drawTools.map((n) => <Tool key={n} name={n} />)}
        </div>
        <div className="ml-px flex min-w-0 flex-1 flex-col border-t border-l-2 border-[#7f7f7f]">
          <Drawing />
          <LayoutTabs />
        </div>
        <div role="toolbar" aria-label="Dimension" className="ml-[2px] flex w-[18px] shrink-0 flex-col items-center self-start border-r border-b border-[#c2c2c2] pt-[2px] pb-[2px]">
          <HGrip />
          {dimensionGroups.map((g, i) => (
            <div key={g[0]} className={i === 0 ? "flex flex-col" : "mt-px flex flex-col border-t border-[#b5b5b5] pt-[2px]"}>
              {g.map((n) => <Tool key={n} name={n} />)}
            </div>
          ))}
        </div>
        <div className="ml-px flex w-[19px] shrink-0 flex-col">
          <div role="toolbar" aria-label="Modify" className="flex flex-col items-center border-b border-[#c2c2c2] pt-[2px] pb-[5px]">
            <HGrip />
            {modifyTools.map((n) => <Tool key={n} name={n} />)}
          </div>
          <div role="toolbar" aria-label="Draw order" className="flex flex-col items-center border-b border-[#c2c2c2] pt-[2px] pb-1">
            <HGrip />
            {orderTools.map((n) => <Tool key={n} name={n} />)}
          </div>
        </div>
      </main>
      <CommandWindow />
      <StatusBar />
      <Taskbar />
      <Banner />
    </div>
  );
}
